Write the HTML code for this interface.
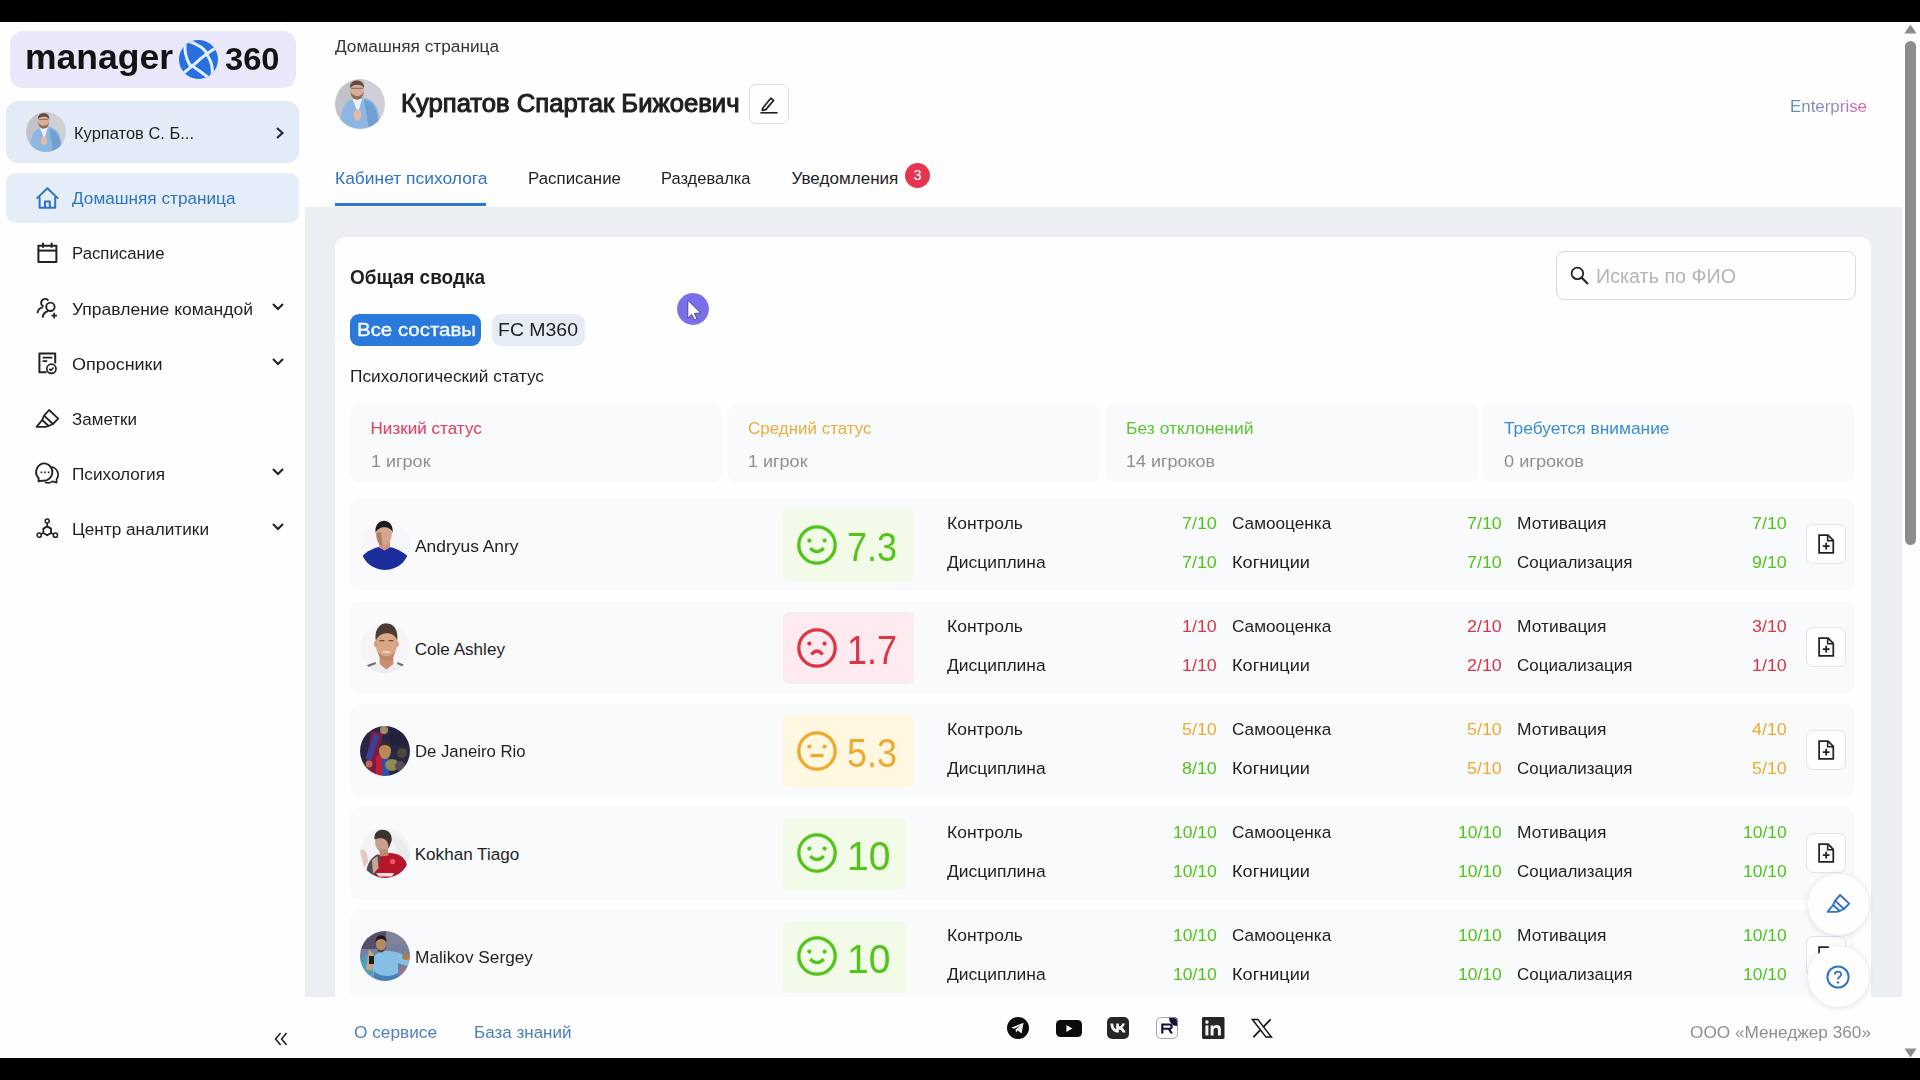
<!DOCTYPE html>
<html lang="ru"><head><meta charset="utf-8"><title>Manager 360</title>
<style>
html,body{margin:0;padding:0;width:1920px;height:1080px;overflow:hidden;background:#fefefe;font-family:"Liberation Sans", sans-serif;}
.t{position:absolute;white-space:nowrap;line-height:1;transform-origin:0 0;}
svg{position:absolute;overflow:visible}
#app{position:absolute;left:0;top:0;width:1920px;height:1080px;overflow:hidden}
</style></head><body><div id="app">
<div style="position:absolute;left:0px;top:0px;width:1920px;height:22px;background:#000;border-radius:0px;"></div>
<div style="position:absolute;left:0px;top:1058px;width:1920px;height:22px;background:#000;border-radius:0px;"></div>
<div style="position:absolute;left:305px;top:206.8px;width:1597px;height:790.2px;background:#ebeef3;border-radius:0px;"></div>
<div style="position:absolute;left:335px;top:237px;width:1536px;height:780px;background:#fefefe;border-radius:10px;"></div>
<div style="position:absolute;left:10px;top:31px;width:286px;height:57px;background:#e8e8fa;border-radius:13px;"></div>
<svg style="left:179px;top:40px" width="39" height="39" viewBox="0 0 39 39">
<defs><clipPath id="gc"><circle cx="19.5" cy="19.5" r="19.5"/></clipPath></defs>
<circle cx="19.5" cy="19.5" r="19.5" fill="#2870e0"/>
<g clip-path="url(#gc)" fill="none" stroke="#e4f1fc" stroke-width="3" stroke-linecap="round">
<path d="M10 1.5 C 20 4, 27 10, 28.5 15.5 C 32 21, 34.5 27, 33 36"/>
<path d="M37.5 7.5 C 30 12, 22 18, 17 22.8 C 12 27, 8 30, 4 33.5"/>
<path d="M6.2 3.5 C 5.4 10, 7 18, 10.5 24.5"/>
<path d="M10.5 24.5 C 16 27, 20 31, 28 36.5"/>
</g></svg>
<div style="position:absolute;left:6px;top:101px;width:293px;height:62px;background:#e3ebf6;border-radius:12px;"></div>
<svg style="left:274px;top:126px" width="12" height="14" viewBox="0 0 12 14"><path d="M3 2 L8.5 7 L3 12" fill="none" stroke="#2a2a3a" stroke-width="2.2"/></svg>
<div style="position:absolute;left:6px;top:173px;width:293px;height:50px;background:#e5edf8;border-radius:10px;"></div>
<svg style="left:271px;top:302px" width="14" height="10" viewBox="0 0 14 10"><path d="M2 2 L7 7 L12 2" fill="none" stroke="#222" stroke-width="2.1"/></svg>
<svg style="left:271px;top:357px" width="14" height="10" viewBox="0 0 14 10"><path d="M2 2 L7 7 L12 2" fill="none" stroke="#222" stroke-width="2.1"/></svg>
<svg style="left:271px;top:467px" width="14" height="10" viewBox="0 0 14 10"><path d="M2 2 L7 7 L12 2" fill="none" stroke="#222" stroke-width="2.1"/></svg>
<svg style="left:271px;top:522px" width="14" height="10" viewBox="0 0 14 10"><path d="M2 2 L7 7 L12 2" fill="none" stroke="#222" stroke-width="2.1"/></svg>
<div style="position:absolute;left:749px;top:84px;width:38px;height:38px;background:#fefefe;border-radius:7px;border:1px solid #dcdce6;"></div>
<div style="position:absolute;left:335px;top:203px;width:151.3px;height:3px;background:#2b78d4;border-radius:0px;"></div>
<div style="position:absolute;left:905px;top:162.5px;width:25px;height:25px;background:#e5364f;border-radius:13px;"></div>
<div style="position:absolute;left:1556px;top:251px;width:298px;height:47.2px;background:#fefefe;border-radius:8px;border:1px solid #d9d9e3;"></div>
<svg style="left:1570px;top:266px" width="19" height="19" viewBox="0 0 19 19"><circle cx="7.4" cy="7.4" r="5.8" fill="none" stroke="#222" stroke-width="1.8"/><path d="M11.5 11.5 L18 18" stroke="#222" stroke-width="2.1" stroke-linecap="butt"/></svg>
<div style="position:absolute;left:350px;top:314px;width:131px;height:32px;background:#2a7adc;border-radius:9px;"></div>
<div style="position:absolute;left:491.5px;top:314px;width:93.5px;height:32px;background:#e6ecf5;border-radius:9px;"></div>
<div style="position:absolute;left:350.0px;top:403px;width:372px;height:80px;background:#f9fafc;border-radius:10px;"></div>
<div style="position:absolute;left:727.8px;top:403px;width:372px;height:80px;background:#f9fafc;border-radius:10px;"></div>
<div style="position:absolute;left:1105.6px;top:403px;width:372px;height:80px;background:#f9fafc;border-radius:10px;"></div>
<div style="position:absolute;left:1483.4px;top:403px;width:372px;height:80px;background:#f9fafc;border-radius:10px;"></div>
<div style="position:absolute;left:350px;top:498.29999999999995px;width:1505.4px;height:92.6px;background:#f9fafc;border-radius:10px;"></div>
<div style="position:absolute;left:782.5px;top:508.9px;width:131px;height:72px;background:#f1fbe8;border-radius:6px;"></div>
<div style="position:absolute;left:797px;top:524.9px;width:40px;height:40px"><svg width="40" height="40" viewBox="0 0 40 40" fill="none" stroke="#52c41a" stroke-width="3.3"><circle cx="20" cy="20" r="18.2"/><path d="M13.2 23.2 Q20 30.2 26.8 23.2" /><circle cx="12.4" cy="15.6" r="2.1" fill="#52c41a" stroke="none"/><circle cx="27.6" cy="15.6" r="2.1" fill="#52c41a" stroke="none"/></svg></div>
<div style="position:absolute;left:1806px;top:524.1px;width:38px;height:38px;background:#fefefe;border-radius:7px;border:1px solid #e2e3ec;"></div>
<svg style="left:1818px;top:533.9px" width="16.4" height="20" viewBox="0 0 18 22" fill="none" stroke="#222" stroke-width="1.9" stroke-linejoin="miter">
<path d="M1.2 1.2 H11 L16.8 7 V20.8 H1.2 Z"/><path d="M10.6 1.4 V7.4 H16.6" stroke-width="1.7"/><path d="M9 9.6 V17 M5.3 13.3 H12.7" stroke-width="2"/></svg>
<div style="position:absolute;left:350px;top:601.3px;width:1505.4px;height:92.6px;background:#f9fafc;border-radius:10px;"></div>
<div style="position:absolute;left:782.5px;top:611.9px;width:131px;height:72px;background:#fdeaee;border-radius:6px;"></div>
<div style="position:absolute;left:797px;top:627.7px;width:40px;height:40px"><svg width="40" height="40" viewBox="0 0 40 40" fill="none" stroke="#dc3545" stroke-width="3.3"><circle cx="20" cy="20" r="18.2"/><path d="M14.4 26.6 Q20 19.4 25.6 26.6" /><circle cx="12.4" cy="15.6" r="2.1" fill="#dc3545" stroke="none"/><circle cx="27.6" cy="15.6" r="2.1" fill="#dc3545" stroke="none"/></svg></div>
<div style="position:absolute;left:1806px;top:627.1px;width:38px;height:38px;background:#fefefe;border-radius:7px;border:1px solid #e2e3ec;"></div>
<svg style="left:1818px;top:636.9px" width="16.4" height="20" viewBox="0 0 18 22" fill="none" stroke="#222" stroke-width="1.9" stroke-linejoin="miter">
<path d="M1.2 1.2 H11 L16.8 7 V20.8 H1.2 Z"/><path d="M10.6 1.4 V7.4 H16.6" stroke-width="1.7"/><path d="M9 9.6 V17 M5.3 13.3 H12.7" stroke-width="2"/></svg>
<div style="position:absolute;left:350px;top:704.3px;width:1505.4px;height:92.6px;background:#f9fafc;border-radius:10px;"></div>
<div style="position:absolute;left:782.5px;top:714.9px;width:131px;height:72px;background:#fff7df;border-radius:6px;"></div>
<div style="position:absolute;left:797px;top:730.5px;width:40px;height:40px"><svg width="40" height="40" viewBox="0 0 40 40" fill="none" stroke="#eeaa2e" stroke-width="3.3"><circle cx="20" cy="20" r="18.2"/><path d="M13.6 24.6 L26.4 24.6" /><circle cx="12.4" cy="15.6" r="2.1" fill="#eeaa2e" stroke="none"/><circle cx="27.6" cy="15.6" r="2.1" fill="#eeaa2e" stroke="none"/></svg></div>
<div style="position:absolute;left:1806px;top:730.1px;width:38px;height:38px;background:#fefefe;border-radius:7px;border:1px solid #e2e3ec;"></div>
<svg style="left:1818px;top:739.9px" width="16.4" height="20" viewBox="0 0 18 22" fill="none" stroke="#222" stroke-width="1.9" stroke-linejoin="miter">
<path d="M1.2 1.2 H11 L16.8 7 V20.8 H1.2 Z"/><path d="M10.6 1.4 V7.4 H16.6" stroke-width="1.7"/><path d="M9 9.6 V17 M5.3 13.3 H12.7" stroke-width="2"/></svg>
<div style="position:absolute;left:350px;top:807.3px;width:1505.4px;height:92.6px;background:#f9fafc;border-radius:10px;"></div>
<div style="position:absolute;left:782.5px;top:817.9px;width:123px;height:72px;background:#f1fbe8;border-radius:6px;"></div>
<div style="position:absolute;left:797px;top:833.3px;width:40px;height:40px"><svg width="40" height="40" viewBox="0 0 40 40" fill="none" stroke="#52c41a" stroke-width="3.3"><circle cx="20" cy="20" r="18.2"/><path d="M13.2 23.2 Q20 30.2 26.8 23.2" /><circle cx="12.4" cy="15.6" r="2.1" fill="#52c41a" stroke="none"/><circle cx="27.6" cy="15.6" r="2.1" fill="#52c41a" stroke="none"/></svg></div>
<div style="position:absolute;left:1806px;top:833.1px;width:38px;height:38px;background:#fefefe;border-radius:7px;border:1px solid #e2e3ec;"></div>
<svg style="left:1818px;top:842.9px" width="16.4" height="20" viewBox="0 0 18 22" fill="none" stroke="#222" stroke-width="1.9" stroke-linejoin="miter">
<path d="M1.2 1.2 H11 L16.8 7 V20.8 H1.2 Z"/><path d="M10.6 1.4 V7.4 H16.6" stroke-width="1.7"/><path d="M9 9.6 V17 M5.3 13.3 H12.7" stroke-width="2"/></svg>
<div style="position:absolute;left:350px;top:910.3px;width:1505.4px;height:92.6px;background:#f9fafc;border-radius:10px;"></div>
<div style="position:absolute;left:782.5px;top:920.9px;width:123px;height:72px;background:#f1fbe8;border-radius:6px;"></div>
<div style="position:absolute;left:797px;top:936.1px;width:40px;height:40px"><svg width="40" height="40" viewBox="0 0 40 40" fill="none" stroke="#52c41a" stroke-width="3.3"><circle cx="20" cy="20" r="18.2"/><path d="M13.2 23.2 Q20 30.2 26.8 23.2" /><circle cx="12.4" cy="15.6" r="2.1" fill="#52c41a" stroke="none"/><circle cx="27.6" cy="15.6" r="2.1" fill="#52c41a" stroke="none"/></svg></div>
<div style="position:absolute;left:1806px;top:936.1px;width:38px;height:38px;background:#fefefe;border-radius:7px;border:1px solid #e2e3ec;"></div>
<svg style="left:1818px;top:945.9px" width="16.4" height="20" viewBox="0 0 18 22" fill="none" stroke="#222" stroke-width="1.9" stroke-linejoin="miter">
<path d="M1.2 1.2 H11 L16.8 7 V20.8 H1.2 Z"/><path d="M10.6 1.4 V7.4 H16.6" stroke-width="1.7"/><path d="M9 9.6 V17 M5.3 13.3 H12.7" stroke-width="2"/></svg>
<svg style="left:35px;top:186px" width="25" height="24" viewBox="0 0 25 24" fill="none" stroke="#2f73c2" stroke-width="2" stroke-linejoin="round"><path d="M1.6 12.6 L12.4 2.2 L23.2 12.6"/><path d="M4.6 11 V21.8 H20.2 V11"/><path d="M10 21.8 V15.4 H14.8 V21.8"/></svg>
<svg style="left:36px;top:241px" width="24" height="24" viewBox="0 0 24 24" fill="none" stroke="#222" stroke-width="2" stroke-linejoin="round"><rect x="2.4" y="4.8" width="18" height="16.2"/><path d="M2.4 9.6 H20.4"/><path d="M7 1.8 V6.8 M15.6 1.8 V6.8"/></svg>
<svg style="left:35px;top:296px" width="26" height="26" viewBox="0 0 26 26" fill="none" stroke="#222" stroke-width="1.9" stroke-linejoin="round"><circle cx="15.4" cy="10.8" r="4.2"/><path d="M7.6 21.6 C8.2 17.4 10.4 15.6 13 15.2"/><path d="M13.4 4.6 A4 4 0 1 0 8.6 10.6"/><path d="M2.4 17.2 C3 13.6 5 11.8 7.8 11.4"/><path d="M19.2 16.8 V22.4 M16.4 19.6 H22" stroke-width="1.7"/></svg>
<svg style="left:36px;top:350px" width="26" height="26" viewBox="0 0 26 26" fill="none" stroke="#222" stroke-width="2" stroke-linejoin="round"><path d="M19.2 13.6 V3.6 H3.4 V22.2 H10.6"/><path d="M6.6 7.6 H16.4 M6.6 11.2 H11.2" stroke-width="1.7"/><circle cx="15.4" cy="18.8" r="4.6" stroke-width="1.7"/><path d="M13.2 18.8 L14.8 20.4 L17.6 17.4" stroke-width="1.5"/></svg>
<svg style="left:36px;top:408.6px" width="24" height="20" viewBox="0 0 24 20" fill="none" stroke="#222" stroke-width="1.8" stroke-linejoin="round"><path d="M13.1 1 L22.2 9.6 L16.9 15 L8.1 6.6 Z"/><path d="M8.1 6.6 L6.2 11 L12.7 17 L16.9 15"/><path d="M6.2 11 L0.6 17.9 H9.6 L12.7 17"/></svg>
<svg style="left:34px;top:461px" width="26" height="24" viewBox="0 0 26 24" fill="none" stroke="#222" stroke-width="1.9" stroke-linejoin="round"><path d="M11 2.4 A8.6 8.6 0 0 0 4.6 17 L4.6 20.4 L8.4 19.6 A8.6 8.6 0 1 0 11 2.4 Z"/><path d="M17.6 6 A7.6 7.6 0 0 1 22.6 18 L22.6 21.6 L18.6 20.4 A8 8 0 0 1 11 21.2" stroke-width="1.7"/><path d="M6.6 11.4 H8.2 M10.2 11.4 H11.8 M13.8 11.4 H15.4" stroke-width="1.6"/></svg>
<svg style="left:35px;top:517px" width="26" height="22" viewBox="0 0 26 22" fill="none" stroke="#222" stroke-width="1.9" stroke-linejoin="round"><path d="M12.2 9.4 L16 11.6 V16 L12.2 18.2 L8.4 16 V11.6 Z" stroke-width="1.9"/><circle cx="12.2" cy="4" r="2" stroke-width="1.5"/><circle cx="4.2" cy="18.2" r="2.1" stroke-width="1.5"/><circle cx="20.4" cy="18.2" r="2.1" stroke-width="1.5"/><path d="M12.2 6 V9.4 M8.4 16 L6 17.2 M16 16 L18.6 17.2" stroke-width="1.6"/></svg>
<svg style="left:759px;top:95px" width="20" height="20" viewBox="0 0 20 20" fill="none" stroke="#222" stroke-width="1.7" stroke-linejoin="round"><path d="M4 12.8 L11.8 3.2 L14.6 5.4 L6.8 14.6 L3.2 15.4 Z" stroke-width="1.7"/><path d="M1.4 17.8 H18.6" stroke-width="1.6"/></svg>
<svg width="0" height="0" style="left:0;top:0"><defs><filter id="avblur" x="-10%" y="-10%" width="120%" height="120%"><feGaussianBlur stdDeviation="0.55"/></filter></defs></svg>
<svg style="left:26px;top:112px" width="40" height="40" viewBox="0 0 50 50"><defs><clipPath id="av0"><circle cx="25" cy="25" r="25"/></clipPath></defs>
<g clip-path="url(#av0)"><g filter="url(#avblur)"><rect x="-4" y="-4" width="58" height="58" fill="#c2c3c8"/><rect x="29" width="21" height="50" fill="#cfd0d6"/>
<path d="M5 50 C5 30 10 22 18 20 L30 19 C40 21 45 30 45 50 Z" fill="#8db6e2"/><path d="M29 21 C38 22 43 30 44 50 L34 50 Z" fill="#6f9fd4"/>
<path d="M17.5 20 L23 34 L27 20 Z" fill="#eef1f5"/>
<ellipse cx="22" cy="11" rx="6.8" ry="9.6" fill="#d9ad98"/><path d="M15 9 C14 -1 30 -1 29 9 C27 4.5 18 4.5 15 9 Z" fill="#5d4c40"/>
<path d="M15.6 13 C16 23 28 23 28.6 13 C26 18.5 18.6 18.5 15.6 13Z" fill="#8c6c5c"/><rect x="16" y="8.8" width="12" height="1" fill="#4a3b36" opacity=".6"/>
<ellipse cx="22.5" cy="36" rx="4" ry="5.4" fill="#e2bba6"/></g></g></svg>
<svg style="left:335px;top:79px" width="50" height="50" viewBox="0 0 50 50"><defs><clipPath id="av1"><circle cx="25" cy="25" r="25"/></clipPath></defs>
<g clip-path="url(#av1)"><g filter="url(#avblur)"><rect x="-4" y="-4" width="58" height="58" fill="#c2c3c8"/><rect x="29" width="21" height="50" fill="#cfd0d6"/>
<path d="M5 50 C5 30 10 22 18 20 L30 19 C40 21 45 30 45 50 Z" fill="#8db6e2"/><path d="M29 21 C38 22 43 30 44 50 L34 50 Z" fill="#6f9fd4"/>
<path d="M17.5 20 L23 34 L27 20 Z" fill="#eef1f5"/>
<ellipse cx="22" cy="11" rx="6.8" ry="9.6" fill="#d9ad98"/><path d="M15 9 C14 -1 30 -1 29 9 C27 4.5 18 4.5 15 9 Z" fill="#5d4c40"/>
<path d="M15.6 13 C16 23 28 23 28.6 13 C26 18.5 18.6 18.5 15.6 13Z" fill="#8c6c5c"/><rect x="16" y="8.8" width="12" height="1" fill="#4a3b36" opacity=".6"/>
<ellipse cx="22.5" cy="36" rx="4" ry="5.4" fill="#e2bba6"/></g></g></svg>
<svg style="left:360px;top:520.0px" width="50" height="50" viewBox="0 0 50 50"><defs><clipPath id="pc0"><circle cx="25" cy="25" r="25"/></clipPath></defs><g clip-path="url(#pc0)"><rect width="50" height="50" fill="#f7f7fb"/><g filter="url(#avblur)"><path d="M2.5 36 C7 31 13 28.4 19 27 L30 27 C36 28.4 42 31 47.5 36 C44 46 34 50.5 25 50.5 C16 50.5 6 46 2.5 36 Z" fill="#1a2e9c"/><path d="M18.6 20 H30 V27.4 L24.6 30.6 L19 27.4 Z" fill="#c9957d"/><ellipse cx="24" cy="13.6" rx="7.9" ry="11.6" fill="#d6a58c"/><path d="M15.6 13 C13.6 -3.4 34.4 -3.4 32.6 13 C31.4 5.4 18 5 15.6 13 Z" fill="#1d1a1a"/><path d="M16.2 13 C16.4 22 19.4 25 22.6 25.4 L21 12 Z" fill="#a3735f" opacity=".75"/></g></g></svg>
<svg style="left:360px;top:622.8px" width="50" height="50" viewBox="0 0 50 50"><defs><clipPath id="pc1"><circle cx="25" cy="25" r="25"/></clipPath></defs><g clip-path="url(#pc1)"><rect width="50" height="50" fill="#f5f5f8"/><g filter="url(#avblur)"><path d="M2 50 C4 43 12 40.6 26 40.6 C40 40.6 47 43 49 50 Z" fill="#ededf1"/><path d="M6 42.6 L15.4 39 L16 41 L7 44.6 Z M46 42.6 L37.6 39 L37 41 L45 44.6 Z" fill="#6f716a"/><path d="M19.6 32 H33.4 V41 L26.4 46.4 L19.6 41 Z" fill="#c98f70"/><ellipse cx="26.4" cy="20" rx="10.6" ry="16.6" fill="#dba685"/><ellipse cx="15.6" cy="21" rx="1.6" ry="3" fill="#d39c7c"/><ellipse cx="37.2" cy="21" rx="1.6" ry="3" fill="#d39c7c"/><path d="M15.8 18 C12 -5.6 41 -5.6 37 18 C35.4 8 19.4 7.6 15.8 18 Z" fill="#4b3c33"/><path d="M17.6 28 C19.6 41 33.4 41 35.2 28 C32 34.6 20.8 34.6 17.6 28 Z" fill="#b98465" opacity=".85"/><path d="M19.6 17.6 h4.8 M28.6 17.6 h4.8" stroke="#6a4a3a" stroke-width="1.4"/><path d="M22.8 29 h7.2" stroke="#f3e6e0" stroke-width="1.4"/></g></g></svg>
<svg style="left:360px;top:725.6px" width="50" height="50" viewBox="0 0 50 50"><defs><clipPath id="pc2"><circle cx="25" cy="25" r="25"/></clipPath></defs><g clip-path="url(#pc2)"><g filter="url(#avblur)"><rect x="-4" y="-4" width="58" height="58" fill="#2b2846"/><rect x="8" y="6" width="12" height="44" fill="#7c1f3e" transform="rotate(8 14 28)"/><rect x="16" y="30" width="7" height="22" fill="#c21a3a"/><rect x="22" y="32" width="7" height="20" fill="#2f4fa8"/><rect x="10" y="8" width="6" height="26" fill="#3c3f9a" transform="rotate(20 13 20)"/><ellipse cx="25" cy="25" rx="6" ry="8" fill="#b98a55"/><path d="M19 22 C19 14 31 14 31 22 C28 18 22 18 19 22Z" fill="#3a2a22"/><ellipse cx="32" cy="39" rx="7" ry="6" fill="#8e8a52"/><circle cx="42" cy="27" r="5" fill="#4d4a3a"/><circle cx="9" cy="38" r="3.4" fill="#c46a5a"/><circle cx="24" cy="4" r="4" fill="#a78a68"/><rect x="30" y="-2" width="24" height="22" fill="#24243e"/><circle cx="40" cy="40" r="5" fill="#5a4a58"/></g></g></svg>
<svg style="left:360px;top:828.3px" width="50" height="50" viewBox="0 0 50 50"><defs><clipPath id="pc3"><circle cx="25" cy="25" r="25"/></clipPath></defs><g clip-path="url(#pc3)"><rect width="50" height="50" fill="#f4f2f4"/><g filter="url(#avblur)"><path d="M0 22 C4 20 8 24 8 34 L4 40 Z" fill="#e3c9bf"/><path d="M30 6 C40 8 46 16 50 26 L50 34 L40 30 Z" fill="#e9ecef"/><path d="M14 30 C20 24 34 23.4 40 27.6 C46 31 48.6 38 46.4 44 C40 50 30 51 22 50 C16 50 12 48 9.6 45 Z" fill="#b5172a"/><path d="M6 45 C7 35 12 28.6 18 26 L20.6 31 L14.6 49 Z" fill="#514959"/><path d="M12 32 L17.4 28 L18.6 40 L13 46 Z" fill="#c9a592"/><ellipse cx="22.6" cy="14" rx="7.6" ry="10" fill="#c9a08c"/><path d="M14.6 11.4 C12.6 -1.6 33.6 -1.6 31.6 13 L28.4 21 C29.4 10 21 8.6 14.6 11.4 Z" fill="#3a3532"/><path d="M19 21 L27.6 21 L28.6 27.6 L20 28.6 Z" fill="#b98d7a"/><path d="M16 45 H34 L32 48.6 H19 Z" fill="#ecdcdc"/><circle cx="32.6" cy="33.6" r="2.6" fill="#f05468"/></g></g></svg>
<svg style="left:360px;top:931.1px" width="50" height="50" viewBox="0 0 50 50"><defs><clipPath id="pc4"><circle cx="25" cy="25" r="25"/></clipPath></defs><g clip-path="url(#pc4)"><g filter="url(#avblur)"><rect x="-4" y="-4" width="58" height="58" fill="#76809a"/><rect x="-4" y="-4" width="30" height="22" fill="#55506a"/><rect x="26" y="-4" width="30" height="18" fill="#7f8299"/><path d="M0 30 C6 22 14 20 14 20 L12 50 L0 50 Z" fill="#4aa0c4"/><path d="M12 30 C14 22 22 19 30 20 C40 21 50 26 50 30 L50 36 L38 32 L38 50 L14 50 Z" fill="#86bfe4"/><path d="M14 40 C18 45 30 47 38 42 L38 50 L14 50 Z" fill="#4a7fb6"/><ellipse cx="21" cy="13" rx="5" ry="7" fill="#b58b62"/><path d="M15.5 11 C15 2 27 2 26.6 11 C24 7 18 7 15.5 11Z" fill="#1e1c22"/><path d="M17 17 C18 23 24 23 25 17 C23 20 19 20 17 17Z" fill="#5a4332"/><path d="M9 18 L14 24 L12 40 L6 38 Z" fill="#caa27c"/><rect x="9" y="25" width="5" height="8" fill="#1b1b22"/><ellipse cx="46" cy="26" rx="4" ry="3" fill="#a97c50"/><path d="M10 44 L16 50 L4 50 Z" fill="#d58aa0"/><path d="M40 40 L48 36 L46 46 Z" fill="#b86a78"/></g></g></svg>
<span class="t" style="left:25.00px;top:40.32px;font-size:34.7px;color:#131313;font-weight:700;transform:scaleX(1.0236);">manager</span>
<span class="t" style="left:224.50px;top:43.90px;font-size:31.3px;color:#131313;font-weight:700;transform:scaleX(1.0437);">360</span>
<span class="t" style="left:74.00px;top:124.52px;font-size:17.1px;color:#1f1f1f;transform:scaleX(0.9639);">Курпатов С. Б...</span>
<span class="t" style="left:71.60px;top:190.32px;font-size:17.1px;color:#2f73c2;transform:scaleX(1.0054);">Домашняя страница</span>
<span class="t" style="left:71.60px;top:245.42px;font-size:17.1px;color:#1f1f1f;transform:scaleX(0.9814);">Расписание</span>
<span class="t" style="left:71.60px;top:300.52px;font-size:17.1px;color:#1f1f1f;transform:scaleX(1.0244);">Управление командой</span>
<span class="t" style="left:71.60px;top:355.62px;font-size:17.1px;color:#1f1f1f;transform:scaleX(1.0506);">Опросники</span>
<span class="t" style="left:71.60px;top:410.72px;font-size:17.1px;color:#1f1f1f;transform:scaleX(0.9940);">Заметки</span>
<span class="t" style="left:71.60px;top:465.82px;font-size:17.1px;color:#1f1f1f;transform:scaleX(1.0044);">Психология</span>
<span class="t" style="left:71.60px;top:520.92px;font-size:17.1px;color:#1f1f1f;transform:scaleX(1.0069);">Центр аналитики</span>
<span class="t" style="left:335.00px;top:37.52px;font-size:17.1px;color:#333;transform:scaleX(1.0085);">Домашняя страница</span>
<span class="t" style="left:400.80px;top:91.22px;font-size:24.9px;color:#1f1f1f;transform:scaleX(1.0307);-webkit-text-stroke:1.05px #1f1f1f;">Курпатов Спартак Бижоевич</span>
<span class="t" style="left:1789.50px;top:98.22px;font-size:17.1px;color:#8a8fc0;transform:scaleX(0.9882);background:linear-gradient(90deg,#5f8fb8,#9a86c8 60%,#e0609c);-webkit-background-clip:text;background-clip:text;color:transparent;">Enterprise</span>
<span class="t" style="left:335.00px;top:169.72px;font-size:17.1px;color:#2f73c2;transform:scaleX(1.0191);">Кабинет психолога</span>
<span class="t" style="left:528.00px;top:169.72px;font-size:17.1px;color:#1f1f1f;transform:scaleX(0.9867);">Расписание</span>
<span class="t" style="left:661.00px;top:169.72px;font-size:17.1px;color:#1f1f1f;transform:scaleX(0.9641);">Раздевалка</span>
<span class="t" style="left:791.50px;top:169.72px;font-size:17.1px;color:#1f1f1f;">Уведомления</span>
<span class="t" style="left:913.40px;top:168.12px;font-size:14.5px;color:#fff;">3</span>
<span class="t" style="left:350.00px;top:268.16px;font-size:19.3px;color:#1f1f1f;font-weight:700;transform:scaleX(0.9839);">Общая сводка</span>
<span class="t" style="left:1596.00px;top:266.57px;font-size:19.4px;color:#b5b5b5;transform:scaleX(1.0166);">Искать по ФИО</span>
<span class="t" style="left:356.50px;top:320.98px;font-size:18.8px;color:#fff;transform:scaleX(1.0883);-webkit-text-stroke:0.3px #fff;">Все составы</span>
<span class="t" style="left:498.00px;top:320.98px;font-size:18.8px;color:#222;transform:scaleX(1.0358);">FC M360</span>
<span class="t" style="left:350.00px;top:367.92px;font-size:17.1px;color:#1f1f1f;transform:scaleX(1.0112);">Психологический статус</span>
<span class="t" style="left:370.50px;top:419.62px;font-size:17.1px;color:#d9435f;">Низкий статус</span>
<span class="t" style="left:370.50px;top:452.52px;font-size:17.1px;color:#8f8f8f;transform:scaleX(1.0525);">1 игрок</span>
<span class="t" style="left:748.30px;top:419.62px;font-size:17.1px;color:#e6ae3c;transform:scaleX(0.9921);">Средний статус</span>
<span class="t" style="left:748.30px;top:452.52px;font-size:17.1px;color:#8f8f8f;transform:scaleX(1.0525);">1 игрок</span>
<span class="t" style="left:1126.10px;top:419.62px;font-size:17.1px;color:#5cc531;transform:scaleX(1.0222);">Без отклонений</span>
<span class="t" style="left:1126.10px;top:452.52px;font-size:17.1px;color:#8f8f8f;transform:scaleX(1.0492);">14 игроков</span>
<span class="t" style="left:1503.90px;top:419.62px;font-size:17.1px;color:#3a8bd0;transform:scaleX(1.0151);">Требуется внимание</span>
<span class="t" style="left:1503.90px;top:452.52px;font-size:17.1px;color:#8f8f8f;transform:scaleX(1.0622);">0 игроков</span>
<span class="t" style="left:414.70px;top:537.82px;font-size:17.1px;color:#1f1f1f;transform:scaleX(1.0180);">Andryus Anry</span>
<span class="t" style="left:847.20px;top:526.93px;font-size:40px;color:#52c41a;transform:scaleX(0.8991);">7.3</span>
<span class="t" style="left:947.00px;top:514.72px;font-size:17.1px;color:#1f1f1f;transform:scaleX(1.0234);">Контроль</span>
<span class="t" style="left:1181.50px;top:514.72px;font-size:17.1px;color:#52c41a;transform:scaleX(1.0456);">7/10</span>
<span class="t" style="left:947.00px;top:553.62px;font-size:17.1px;color:#1f1f1f;transform:scaleX(1.0202);">Дисциплина</span>
<span class="t" style="left:1181.50px;top:553.62px;font-size:17.1px;color:#52c41a;transform:scaleX(1.0456);">7/10</span>
<span class="t" style="left:1232.00px;top:514.72px;font-size:17.1px;color:#1f1f1f;transform:scaleX(1.0059);">Самооценка</span>
<span class="t" style="left:1466.70px;top:514.72px;font-size:17.1px;color:#52c41a;transform:scaleX(1.0456);">7/10</span>
<span class="t" style="left:1232.00px;top:553.62px;font-size:17.1px;color:#1f1f1f;transform:scaleX(1.0601);">Когниции</span>
<span class="t" style="left:1466.70px;top:553.62px;font-size:17.1px;color:#52c41a;transform:scaleX(1.0456);">7/10</span>
<span class="t" style="left:1517.00px;top:514.72px;font-size:17.1px;color:#1f1f1f;transform:scaleX(1.0178);">Мотивация</span>
<span class="t" style="left:1751.50px;top:514.72px;font-size:17.1px;color:#52c41a;transform:scaleX(1.0456);">7/10</span>
<span class="t" style="left:1517.00px;top:553.62px;font-size:17.1px;color:#1f1f1f;transform:scaleX(0.9942);">Социализация</span>
<span class="t" style="left:1751.50px;top:553.62px;font-size:17.1px;color:#52c41a;transform:scaleX(1.0456);">9/10</span>
<span class="t" style="left:414.70px;top:640.52px;font-size:17.1px;color:#1f1f1f;">Cole Ashley</span>
<span class="t" style="left:847.20px;top:629.93px;font-size:40px;color:#dc3545;transform:scaleX(0.8991);">1.7</span>
<span class="t" style="left:947.00px;top:617.72px;font-size:17.1px;color:#1f1f1f;transform:scaleX(1.0234);">Контроль</span>
<span class="t" style="left:1181.50px;top:617.72px;font-size:17.1px;color:#dc3545;transform:scaleX(1.0456);">1/10</span>
<span class="t" style="left:947.00px;top:656.62px;font-size:17.1px;color:#1f1f1f;transform:scaleX(1.0202);">Дисциплина</span>
<span class="t" style="left:1181.50px;top:656.62px;font-size:17.1px;color:#dc3545;transform:scaleX(1.0456);">1/10</span>
<span class="t" style="left:1232.00px;top:617.72px;font-size:17.1px;color:#1f1f1f;transform:scaleX(1.0059);">Самооценка</span>
<span class="t" style="left:1466.70px;top:617.72px;font-size:17.1px;color:#dc3545;transform:scaleX(1.0456);">2/10</span>
<span class="t" style="left:1232.00px;top:656.62px;font-size:17.1px;color:#1f1f1f;transform:scaleX(1.0601);">Когниции</span>
<span class="t" style="left:1466.70px;top:656.62px;font-size:17.1px;color:#dc3545;transform:scaleX(1.0456);">2/10</span>
<span class="t" style="left:1517.00px;top:617.72px;font-size:17.1px;color:#1f1f1f;transform:scaleX(1.0178);">Мотивация</span>
<span class="t" style="left:1751.50px;top:617.72px;font-size:17.1px;color:#dc3545;transform:scaleX(1.0456);">3/10</span>
<span class="t" style="left:1517.00px;top:656.62px;font-size:17.1px;color:#1f1f1f;transform:scaleX(0.9942);">Социализация</span>
<span class="t" style="left:1751.50px;top:656.62px;font-size:17.1px;color:#dc3545;transform:scaleX(1.0456);">1/10</span>
<span class="t" style="left:414.70px;top:743.22px;font-size:17.1px;color:#1f1f1f;transform:scaleX(0.9773);">De Janeiro Rio</span>
<span class="t" style="left:847.20px;top:732.93px;font-size:40px;color:#eeaa2e;transform:scaleX(0.8991);">5.3</span>
<span class="t" style="left:947.00px;top:720.72px;font-size:17.1px;color:#1f1f1f;transform:scaleX(1.0234);">Контроль</span>
<span class="t" style="left:1181.50px;top:720.72px;font-size:17.1px;color:#eeaa2e;transform:scaleX(1.0456);">5/10</span>
<span class="t" style="left:947.00px;top:759.62px;font-size:17.1px;color:#1f1f1f;transform:scaleX(1.0202);">Дисциплина</span>
<span class="t" style="left:1181.50px;top:759.62px;font-size:17.1px;color:#52c41a;transform:scaleX(1.0456);">8/10</span>
<span class="t" style="left:1232.00px;top:720.72px;font-size:17.1px;color:#1f1f1f;transform:scaleX(1.0059);">Самооценка</span>
<span class="t" style="left:1466.70px;top:720.72px;font-size:17.1px;color:#eeaa2e;transform:scaleX(1.0456);">5/10</span>
<span class="t" style="left:1232.00px;top:759.62px;font-size:17.1px;color:#1f1f1f;transform:scaleX(1.0601);">Когниции</span>
<span class="t" style="left:1466.70px;top:759.62px;font-size:17.1px;color:#eeaa2e;transform:scaleX(1.0456);">5/10</span>
<span class="t" style="left:1517.00px;top:720.72px;font-size:17.1px;color:#1f1f1f;transform:scaleX(1.0178);">Мотивация</span>
<span class="t" style="left:1751.50px;top:720.72px;font-size:17.1px;color:#eeaa2e;transform:scaleX(1.0456);">4/10</span>
<span class="t" style="left:1517.00px;top:759.62px;font-size:17.1px;color:#1f1f1f;transform:scaleX(0.9942);">Социализация</span>
<span class="t" style="left:1751.50px;top:759.62px;font-size:17.1px;color:#eeaa2e;transform:scaleX(1.0456);">5/10</span>
<span class="t" style="left:414.70px;top:845.92px;font-size:17.1px;color:#1f1f1f;">Kokhan Tiago</span>
<span class="t" style="left:847.20px;top:835.93px;font-size:40px;color:#52c41a;transform:scaleX(0.9753);">10</span>
<span class="t" style="left:947.00px;top:823.72px;font-size:17.1px;color:#1f1f1f;transform:scaleX(1.0234);">Контроль</span>
<span class="t" style="left:1172.50px;top:823.72px;font-size:17.1px;color:#52c41a;transform:scaleX(1.0238);">10/10</span>
<span class="t" style="left:947.00px;top:862.62px;font-size:17.1px;color:#1f1f1f;transform:scaleX(1.0202);">Дисциплина</span>
<span class="t" style="left:1172.50px;top:862.62px;font-size:17.1px;color:#52c41a;transform:scaleX(1.0238);">10/10</span>
<span class="t" style="left:1232.00px;top:823.72px;font-size:17.1px;color:#1f1f1f;transform:scaleX(1.0059);">Самооценка</span>
<span class="t" style="left:1457.70px;top:823.72px;font-size:17.1px;color:#52c41a;transform:scaleX(1.0238);">10/10</span>
<span class="t" style="left:1232.00px;top:862.62px;font-size:17.1px;color:#1f1f1f;transform:scaleX(1.0601);">Когниции</span>
<span class="t" style="left:1457.70px;top:862.62px;font-size:17.1px;color:#52c41a;transform:scaleX(1.0238);">10/10</span>
<span class="t" style="left:1517.00px;top:823.72px;font-size:17.1px;color:#1f1f1f;transform:scaleX(1.0178);">Мотивация</span>
<span class="t" style="left:1742.50px;top:823.72px;font-size:17.1px;color:#52c41a;transform:scaleX(1.0238);">10/10</span>
<span class="t" style="left:1517.00px;top:862.62px;font-size:17.1px;color:#1f1f1f;transform:scaleX(0.9942);">Социализация</span>
<span class="t" style="left:1742.50px;top:862.62px;font-size:17.1px;color:#52c41a;transform:scaleX(1.0238);">10/10</span>
<span class="t" style="left:414.70px;top:948.62px;font-size:17.1px;color:#1f1f1f;transform:scaleX(1.0098);">Malikov Sergey</span>
<span class="t" style="left:847.20px;top:938.93px;font-size:40px;color:#52c41a;transform:scaleX(0.9753);">10</span>
<span class="t" style="left:947.00px;top:926.72px;font-size:17.1px;color:#1f1f1f;transform:scaleX(1.0234);">Контроль</span>
<span class="t" style="left:1172.50px;top:926.72px;font-size:17.1px;color:#52c41a;transform:scaleX(1.0238);">10/10</span>
<span class="t" style="left:947.00px;top:965.62px;font-size:17.1px;color:#1f1f1f;transform:scaleX(1.0202);">Дисциплина</span>
<span class="t" style="left:1172.50px;top:965.62px;font-size:17.1px;color:#52c41a;transform:scaleX(1.0238);">10/10</span>
<span class="t" style="left:1232.00px;top:926.72px;font-size:17.1px;color:#1f1f1f;transform:scaleX(1.0059);">Самооценка</span>
<span class="t" style="left:1457.70px;top:926.72px;font-size:17.1px;color:#52c41a;transform:scaleX(1.0238);">10/10</span>
<span class="t" style="left:1232.00px;top:965.62px;font-size:17.1px;color:#1f1f1f;transform:scaleX(1.0601);">Когниции</span>
<span class="t" style="left:1457.70px;top:965.62px;font-size:17.1px;color:#52c41a;transform:scaleX(1.0238);">10/10</span>
<span class="t" style="left:1517.00px;top:926.72px;font-size:17.1px;color:#1f1f1f;transform:scaleX(1.0178);">Мотивация</span>
<span class="t" style="left:1742.50px;top:926.72px;font-size:17.1px;color:#52c41a;transform:scaleX(1.0238);">10/10</span>
<span class="t" style="left:1517.00px;top:965.62px;font-size:17.1px;color:#1f1f1f;transform:scaleX(0.9942);">Социализация</span>
<span class="t" style="left:1742.50px;top:965.62px;font-size:17.1px;color:#52c41a;transform:scaleX(1.0238);">10/10</span>
<svg style="left:677px;top:293px" width="32" height="32" viewBox="0 0 32 32"><circle cx="16" cy="16" r="15.9" fill="#7a6fe8"/>
<path d="M10.8 7.3 L10.8 25.1 L14.8 21.6 L17.6 27 L20 25.9 L17.3 20.4 L23.6 20 Z" fill="#fefefe" stroke="#3d2f80" stroke-width="0.8" stroke-linejoin="round"/></svg>
<div style="position:absolute;left:305px;top:997px;width:1596px;height:61px;background:#fefefe;border-radius:0px;"></div>
<div style="position:absolute;left:0px;top:997px;width:305px;height:61px;background:#fefefe;border-radius:0px;"></div>
<div style="position:absolute;left:0px;top:1058px;width:1920px;height:22px;background:#000;border-radius:0px;"></div>
<svg style="left:1007px;top:1017px" width="22" height="22" viewBox="0 0 22 22"><circle cx="11" cy="11" r="11" fill="#0c0c0c"/><path d="M4.2 10.8 L16.6 5.8 L14.6 16.4 L10.8 13.6 L9 15.6 L8.6 12.4 L14 8 L7.4 11.8 Z" fill="#eee"/></svg>
<svg style="left:1055.5px;top:1020px" width="26" height="17" viewBox="0 0 26 17"><rect width="26" height="17" rx="4.4" fill="#0c0c0c"/><path d="M10.4 5 L16.4 8.5 L10.4 12 Z" fill="#f4f4f4"/></svg>
<svg style="left:1107px;top:1017px" width="22" height="22" viewBox="0 0 22 22"><rect width="22" height="22" rx="5" fill="#272727"/><path transform="translate(11 11) scale(1.15) translate(-10.6 -11)" d="M4 7 H6.4 C6.6 10.4 8 11.8 9 12 V7 H11.4 V9.8 C12.6 9.6 13.8 8.4 14.2 7 H16.6 C16.2 8.8 15 10.2 14.2 10.8 C15 11.2 16.6 12.4 17.2 15 H14.6 C14.2 13.6 13 12.4 11.4 12.2 V15 H11 C6.6 15 4.2 12 4 7 Z" fill="#f4f4f4"/></svg>
<svg style="left:1155.5px;top:1017px" width="22" height="22" viewBox="0 0 22 22"><defs><clipPath id="rt"><rect width="22" height="22" rx="4.6"/></clipPath></defs><g clip-path="url(#rt)"><rect width="22" height="22" fill="#fbfbfd"/><circle cx="21" cy="1" r="8" fill="#14123a"/><circle cx="21" cy="1" r="4" fill="#fbfbfd" opacity="0"/></g><rect x=".5" y=".5" width="21" height="21" rx="4.4" fill="none" stroke="#9a9aa8" stroke-width=".9"/><path d="M5.2 16.4 V6.6 H13.4 C15.8 6.6 16.8 7.8 16.8 9.6 C16.8 11.2 16 12.2 14.6 12.5 L17 16.4 H14.4 L12.2 12.7 H7.4 V16.4 Z M7.4 8.6 V10.8 H13 C14 10.8 14.5 10.4 14.5 9.7 C14.5 9 14 8.6 13 8.6 Z" fill="#14123a" fill-rule="evenodd"/></svg>
<svg style="left:1202px;top:1017px" width="22.5" height="22" viewBox="0 0 22.5 22"><rect width="22.5" height="22" rx="1.4" fill="#252525"/><rect x="3.4" y="8.4" width="3" height="10" fill="#f4f4f4"/><circle cx="4.9" cy="5.1" r="1.8" fill="#f4f4f4"/><path d="M8.6 8.4 H11.4 V9.8 C12 8.8 13.2 8.1 14.8 8.1 C17.8 8.1 18.9 10 18.9 12.8 V18.4 H15.9 V13.4 C15.9 12 15.6 10.8 14.1 10.8 C12.6 10.8 11.6 11.8 11.6 13.4 V18.4 H8.6 Z" fill="#f4f4f4"/></svg>
<svg style="left:1251.5px;top:1019px" width="20" height="18.5" viewBox="0 0 20 18.5"><path d="M0.4 0.4 H5.8 L19.4 18.1 H14 Z" fill="none" stroke="#111" stroke-width="1.5"/><path d="M18.6 0.4 L11.2 8.2 M8.4 10.9 L1.4 18.1" stroke="#111" stroke-width="1.7" fill="none"/></svg>
<div style="position:absolute;left:1807.5px;top:873.5px;width:61px;height:61px;border-radius:50%;background:#fefefe;box-shadow:0 1px 6px rgba(60,70,110,.16)"></div>
<div style="position:absolute;left:1807.5px;top:946px;width:61px;height:61px;border-radius:50%;background:#fefefe;box-shadow:0 1px 6px rgba(60,70,110,.16)"></div>
<svg style="left:1827px;top:893.6px" width="24" height="20" viewBox="0 0 24 20" fill="none" stroke="#2f73c2" stroke-width="1.9" stroke-linejoin="round"><path d="M13.1 1 L22.2 9.6 L16.9 15 L8.1 6.6 Z"/><path d="M8.1 6.6 L6.2 11 L12.7 17 L16.9 15"/><path d="M6.2 11 L0.6 17.9 H9.6 L12.7 17"/></svg>
<svg style="left:1826px;top:964.6px" width="24" height="24" viewBox="0 0 24 24" fill="none" stroke="#2f73c2"><circle cx="12" cy="12" r="10.6" stroke-width="2"/><path d="M8.8 9.6 C8.8 5.6 15.2 5.6 15.2 9.4 C15.2 11.8 12 11.8 12 14.4" stroke-width="1.8"/><circle cx="12" cy="17.4" r="1.2" fill="#2f73c2" stroke="none"/></svg>
<div style="position:absolute;left:1902px;top:22px;width:18px;height:1036px;background:#fdfdfe;border-radius:0px;"></div>
<div style="position:absolute;left:1905px;top:41px;width:11px;height:504px;background:#8c8c8c;border-radius:5.5px;"></div>
<svg style="left:1904px;top:24px" width="13" height="10" viewBox="0 0 13 10"><path d="M6.5 0.6 L12.6 9.4 H0.4 Z" fill="#8c8c8c"/></svg>
<svg style="left:1904px;top:1048px" width="13" height="10" viewBox="0 0 13 10"><path d="M6.5 9.4 L12.6 0.6 H0.4 Z" fill="#8c8c8c"/></svg>
<svg style="left:274px;top:1032px" width="14" height="14" viewBox="0 0 14 14"><path d="M6.6 1 L1.6 7 L6.6 13 M12.6 1 L7.6 7 L12.6 13" fill="none" stroke="#222" stroke-width="1.6"/></svg>
<span class="t" style="left:353.50px;top:1024.12px;font-size:17.1px;color:#4f7fbe;transform:scaleX(1.0085);">О сервисе</span>
<span class="t" style="left:474.00px;top:1024.12px;font-size:17.1px;color:#4a80c2;transform:scaleX(0.9954);">База знаний</span>
<span class="t" style="left:1690.00px;top:1023.92px;font-size:17.1px;color:#8f8f8f;transform:scaleX(1.0063);">ООО «Менеджер 360»</span>
</div></body></html>
